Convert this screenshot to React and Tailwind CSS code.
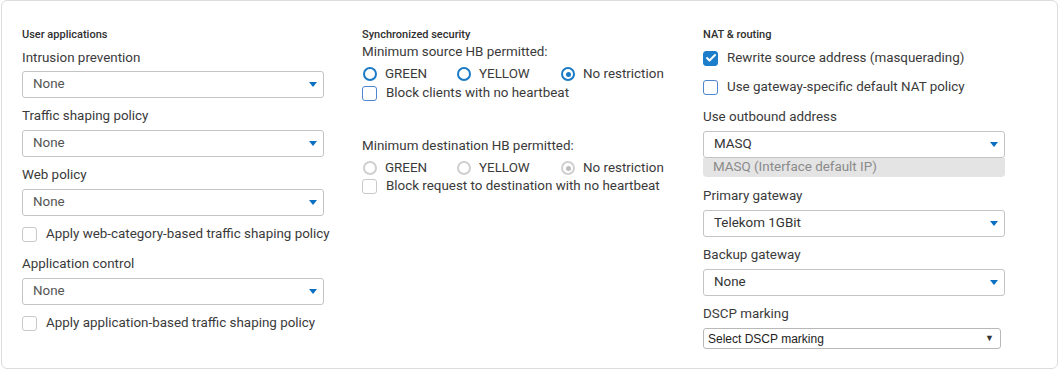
import { Check } from 'lucide-react'

const font = { fontFamily: 'Roboto, "Liberation Sans", sans-serif' }

function Header({ children }) {
  return <div className="h-4 text-[11px] font-medium leading-4 text-[#2f2f2f]">{children}</div>
}

function Label({ children, className = '' }) {
  return <div className={`h-[18px] text-[13.4px] leading-[18px] text-[#3a3a3a] ${className}`}>{children}</div>
}

function Select({ value, className = '', dark }) {
  return (
    <div className={`flex h-[27px] w-[302px] items-center justify-between rounded-[3px] border border-[#c4c4c4] bg-white pl-[10px] pr-[6px] text-[13.4px] ${dark ? 'text-[#333]' : 'text-[#555]'} ${className}`}>
      <span>{value}</span>
      <span className="h-0 w-0 border-x-[4px] border-t-[5px] border-x-transparent border-t-[#0b6fc2]" />
    </div>
  )
}

function Checkbox({ label, checked, tone = 'gray', className = '' }) {
  const box = checked
    ? 'bg-[#1c7dca] border-[#1c7dca]'
    : tone === 'blue'
      ? 'border-[#4d86cf] bg-white'
      : 'border-[#c9c9c9] bg-white'
  return (
    <div className={`flex h-[18px] items-center gap-[9px] text-[13.4px] text-[#3a3a3a] ${className}`}>
      <span className={`flex h-[15px] w-[15px] shrink-0 items-center justify-center rounded-[3px] border ${box}`}>
        {checked && <Check size={12} strokeWidth={4} className="text-white" />}
      </span>
      <span>{label}</span>
    </div>
  )
}

function Radio({ label, checked, disabled, width }) {
  const ring = disabled ? 'border-[#cfcfcf]' : 'border-[#1a7ac6]'
  const dot = disabled ? 'bg-[#bdbdbd]' : 'bg-[#1a7ac6]'
  return (
    <div className={`flex items-center gap-[8px] ${width}`}>
      <span className={`flex h-[14px] w-[14px] items-center justify-center rounded-full border-2 ${ring}`}>
        {checked && <span className={`h-[5px] w-[5px] rounded-full ${dot}`} />}
      </span>
      <span>{label}</span>
    </div>
  )
}

function RadioRow({ disabled }) {
  return (
    <div className="mt-[4px] flex h-[18px] items-center pl-[1px] text-[13.4px] text-[#3a3a3a]">
      <Radio label="GREEN" disabled={disabled} width="w-[94px]" />
      <Radio label="YELLOW" disabled={disabled} width="w-[104px]" />
      <Radio label="No restriction" checked disabled={disabled} />
    </div>
  )
}

export default function App() {
  return (
    <div className="bg-white pl-px" style={font}>
      <div className="grid h-[369px] w-[1057px] grid-cols-[340px_341px_1fr] rounded-[6px] border border-[#dcdcdc] px-5 pt-[26px]">
        {/* user applications */}
        <div>
          <Header>User applications</Header>
          <Label className="mt-[6px]">Intrusion prevention</Label>
          <Select value="None" className="mt-[4px]" />
          <Label className="mt-[9px]">Traffic shaping policy</Label>
          <Select value="None" className="mt-[5px]" />
          <Label className="mt-[9px]">Web policy</Label>
          <Select value="None" className="mt-[5px]" />
          <Checkbox className="mt-[9px]" label="Apply web-category-based traffic shaping policy" />
          <Label className="mt-[12px]">Application control</Label>
          <Select value="None" className="mt-[5px]" />
          <Checkbox className="mt-[9px]" label="Apply application-based traffic shaping policy" />
        </div>

        {/* synchronized security */}
        <div>
          <Header>Synchronized security</Header>
          <Label>Minimum source HB permitted:</Label>
          <RadioRow />
          <Checkbox className="mt-px" tone="blue" label="Block clients with no heartbeat" />
          <Label className="mt-[35px]">Minimum destination HB permitted:</Label>
          <RadioRow disabled />
          <Checkbox className="mt-0" label="Block request to destination with no heartbeat" />
        </div>

        {/* NAT & routing */}
        <div>
          <Header>NAT &amp; routing</Header>
          <Checkbox className="mt-[6px]" checked label="Rewrite source address (masquerading)" />
          <Checkbox className="mt-[11px]" tone="blue" label="Use gateway-specific default NAT policy" />
          <Label className="mt-[12px]">Use outbound address</Label>
          <div className="mt-[5px] w-[302px]">
            <Select value="MASQ" dark className="h-[26px]" />
            <div className="flex h-[19px] items-center rounded-b-[4px] bg-[#e4e4e4] pl-[10px] text-[13.4px] text-[#8a8a8a]">
              MASQ (Interface default IP)
            </div>
          </div>
          <Label className="mt-[10px]">Primary gateway</Label>
          <Select value="Telekom 1GBit" dark className="mt-[5px]" />
          <Label className="mt-[9px]">Backup gateway</Label>
          <Select value="None" dark className="mt-[5px]" />
          <Label className="mt-[9px]">DSCP marking</Label>
          <div
            className="mt-[5px] flex h-[21px] w-[298px] items-center justify-between rounded-[3px] border border-[#b8b8b8] bg-white pl-[4px] pr-[6px] text-[12px] text-[#222]"
            style={{ fontFamily: '"Liberation Sans", Arial, sans-serif' }}
          >
            <span>Select DSCP marking</span>
            <span className="text-[9px] text-[#333]">▼</span>
          </div>
        </div>
      </div>
    </div>
  )
}
